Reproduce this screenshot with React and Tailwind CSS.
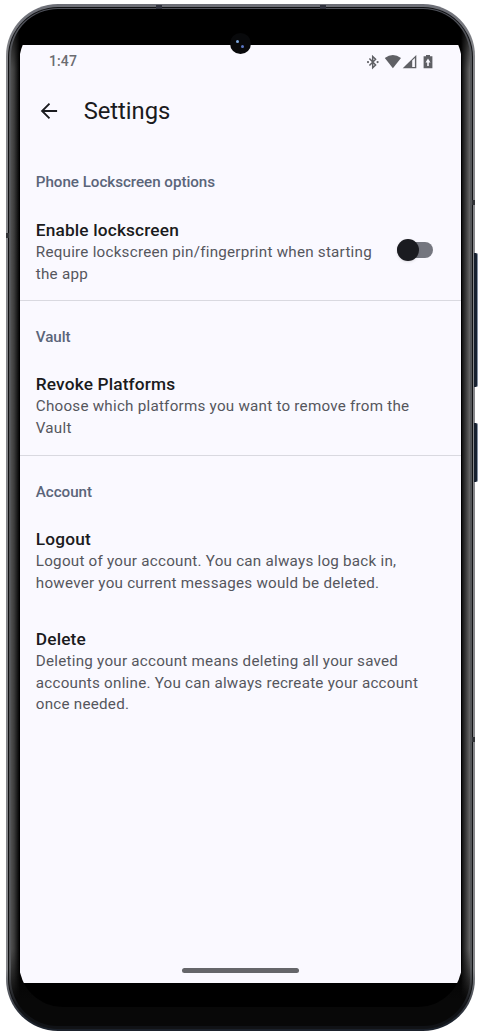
function StatusIcons() {
  return (
    <svg className="absolute left-[346px] top-[6.5px]" width="72" height="20" viewBox="0 0 72 20" fill="none">
      <g stroke="#5f6065" strokeWidth="1.5">
        <path d="M3.4 6.6 L9.6 13 L6.7 15.8 V4.4 L9.6 7.2 L3.4 13.6" />
      </g>
      <circle cx="2" cy="10.1" r="1.1" fill="#5f6065" />
      <circle cx="11.6" cy="10.1" r="1.1" fill="#5f6065" />
      <path d="M18.8 6 Q26.8 0 35 6 L26.9 16.3 Z" fill="#5f6065" />
      <path d="M50.3 3 V16.3 H36.7 Z" fill="#5f6065" />
      <path d="M46.2 8.6 L48.9 6 V15 H46.2 Z" fill="#faf9ff" />
      <path d="M60 3 H64 V4.3 H66.4 V16.3 H57.6 V4.3 H60 Z" fill="#5f6065" />
      <path d="M62 6.4 L59.5 10.6 H61.2 V14 H62.8 V10.6 H64.5 Z" fill="#faf9ff" />
    </svg>
  );
}

function SectionTitle({ children }) {
  return <h2 className="h-[22px] text-[15.2px] leading-[22px] font-medium tracking-[-0.04px] text-[#5a657a]">{children}</h2>;
}

function Item({ title, lines }) {
  return (
    <div className="whitespace-nowrap">
      <h3 className="h-[22px] text-[17.3px] leading-[22px] font-medium tracking-[0.15px] text-[#1a1b20]">{title}</h3>
      <p className="pt-px text-[15.2px] leading-[21.6px] tracking-[0.24px] text-[#55565d]">
        {lines.map((line) => (
          <span key={line} className="block">{line}</span>
        ))}
      </p>
    </div>
  );
}

function Toggle() {
  return (
    <div className="mt-[19px] flex h-[24px] w-[36px] items-center">
      <div className="flex h-[16px] w-[36px] items-center rounded-full bg-[#74767f]">
        <div className="size-[22px] shrink-0 rounded-full bg-[#1a1b20] shadow-sm" />
      </div>
    </div>
  );
}

function Screen() {
  return (
    <div className="relative flex h-[938px] flex-col bg-[#faf9ff]">
      <div className="h-[35px] pt-[6px] pl-[29.5px] text-[14px] leading-[20px] font-medium tracking-[0.1px] text-[#6b6c71]">1:47</div>
      <StatusIcons />
      <header className="flex h-[62px] items-center pl-[20px]">
        <svg width="19" height="20" viewBox="0 0 20 20" fill="none" stroke="#1b1c20" strokeWidth="2">
          <path d="M18 10 H2.5 M10 2.2 L2.2 10 L10 17.8" />
        </svg>
        <h1 className="pl-[25.2px] text-[23.8px] leading-[30px] tracking-[-0.05px] text-[#1a1b20]">Settings</h1>
      </header>
      <section className="flex h-[159px] flex-col border-b border-[#d9d9e0] pt-[29px] pl-[16.3px]">
        <SectionTitle>Phone Lockscreen options</SectionTitle>
        <div className="flex justify-between pt-[26px] pr-[27.7px]">
          <Item title="Enable lockscreen" lines={["Require lockscreen pin/fingerprint when starting", "the app"]} />
          <Toggle />
        </div>
      </section>
      <section className="flex h-[155px] flex-col gap-[25px] border-b border-[#d9d9e0] pt-[25px] pl-[16.3px]">
        <SectionTitle>Vault</SectionTitle>
        <Item title="Revoke Platforms" lines={["Choose which platforms you want to remove from the", "Vault"]} />
      </section>
      <section className="flex grow flex-col pt-[25px] pl-[16.3px]">
        <SectionTitle>Account</SectionTitle>
        <div className="flex flex-col gap-[34px] pt-[25px]">
          <Item title="Logout" lines={["Logout of your account. You can always log back in,", "however you current messages would be deleted."]} />
          <Item title="Delete" lines={["Deleting your account means deleting all your saved", "accounts online. You can always recreate your account", "once needed."]} />
        </div>
      </section>
      <div className="mb-[10px] ml-[162px] h-[5px] w-[117px] rounded-full bg-[#65666a]" />
    </div>
  );
}

export default function App() {
  return (
    <div className="relative h-[1035px] w-[485px] overflow-hidden bg-white pt-[4px] pl-[5.5px] font-['Roboto',sans-serif]">
      <div className="absolute top-[253px] left-[474px] h-[134px] w-[4px] rounded-r-[2px] border-r border-[#8490a2] bg-[#17202e]" />
      <div className="absolute top-[423px] left-[474px] h-[59px] w-[4px] rounded-r-[2px] border-r border-[#8490a2] bg-[#17202e]" />
      <div className="h-[1027px] w-[469.5px] rounded-[52px] bg-[linear-gradient(180deg,#6c6e76_0%,#85868a_5%,#85868a_94%,#1b212b_99%)] p-[2.5px]">
        <div className="h-full rounded-[50px] bg-[#121315] p-[1px]">
          <div className="h-full rounded-[49px] bg-[linear-gradient(180deg,#4f515a_0%,#55575a_5%,#55575a_94%,#101216_98%)] p-[1.5px]">
            <div className="h-full rounded-[47px] bg-[linear-gradient(180deg,#000_0px,#0000_60px,#0000_940px,#080808_990px),linear-gradient(90deg,#505050_0px,#3c3c3c_3px,#1c1c1c_6px,#000_8.5px,#000_450px,#1c1c1c_452px,#3c3c3c_455px,#6a6a6a_459px)] px-[9px] pt-[5px] pb-[19px]">
              <div className="-mx-[0.5px] h-full overflow-hidden rounded-t-[50px] rounded-b-[44px] bg-black px-[0.5px] pt-[31px]">
                <Screen />
              </div>
            </div>
          </div>
        </div>
      </div>
      <div className="absolute top-[5px] left-[156px] h-[4px] w-[6px] bg-[#30323d]" />
      <div className="absolute top-[5px] left-[320px] h-[4px] w-[6px] bg-[#30323d]" />
      <div className="absolute top-[10px] left-[169px] h-[2px] w-[143px] bg-black" />
      <div className="absolute top-[233px] left-[6px] h-[5px] w-[3px] bg-[#303236]" />
      <div className="absolute top-[200px] left-[472px] h-[5px] w-[3px] bg-[#303236]" />
      <div className="absolute top-[737px] left-[472px] h-[5px] w-[3px] bg-[#303236]" />
      <div className="absolute top-[33px] left-[230px] size-[21px] rounded-full bg-[#08090b]">
        <div className="absolute top-[7px] left-[6px] size-[3px] rounded-full bg-[#7fa9df]" />
        <div className="absolute top-[12px] left-[11px] size-[3px] rounded-full bg-[#5a76c4]" />
      </div>
    </div>
  );
}
